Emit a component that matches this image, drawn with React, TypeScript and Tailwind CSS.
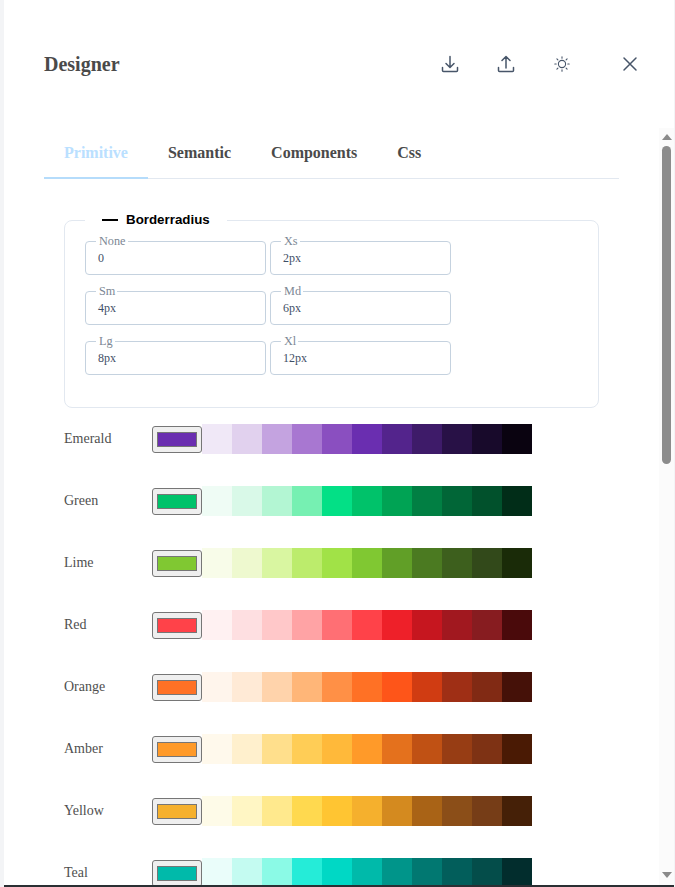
import React from "react";

const radii = [
  { label: "None", value: "0" },
  { label: "Xs", value: "2px" },
  { label: "Sm", value: "4px" },
  { label: "Md", value: "6px" },
  { label: "Lg", value: "8px" },
  { label: "Xl", value: "12px" },
];

const palettes: { name: string; base: string; shades: string[] }[] = [
  { name: "Emerald", base: "#6a2eb0", shades: ["#f0e8f7", "#e1d1ee", "#c4a3e0", "#a877d1", "#8a4fc0", "#6a2eb0", "#53248c", "#3e1b69", "#281146", "#180a2b", "#0a0310"] },
  { name: "Green", base: "#00c26a", shades: ["#effcf5", "#d9f9e8", "#b3f6d3", "#76f0b2", "#03e086", "#00c26a", "#00a354", "#017f43", "#016637", "#01512c", "#012d18"] },
  { name: "Lime", base: "#80c832", shades: ["#f8fce9", "#eef9cf", "#d9f6a1", "#bcec6c", "#a1e247", "#80c832", "#619f27", "#4b7a21", "#3d5f1d", "#32491a", "#1a2b08"] },
  { name: "Red", base: "#ff4249", shades: ["#fff1f2", "#fedfe1", "#ffc8c9", "#ffa3a5", "#ff6f74", "#ff4249", "#ee2029", "#c6161f", "#a1181f", "#871c20", "#4a0a0b"] },
  { name: "Orange", base: "#ff7125", shades: ["#fff5ec", "#ffead6", "#ffd3ab", "#ffb678", "#ff9046", "#ff7125", "#fe5519", "#d03c12", "#9f2f15", "#812a14", "#451108"] },
  { name: "Amber", base: "#ff9a29", shades: ["#fff9ec", "#fff0cd", "#ffdf8c", "#ffcd56", "#ffb93a", "#ff9a29", "#e4711d", "#c05114", "#973d14", "#7e3214", "#4a1a04"] },
  { name: "Yellow", base: "#f5b02d", shades: ["#fefbe8", "#fff6c4", "#ffe98d", "#ffd94f", "#ffc532", "#f5b02d", "#d48a1f", "#a96316", "#8b4e18", "#763d17", "#452007"] },
  { name: "Teal", base: "#00baaa", shades: ["#eafdfa", "#c4fbf1", "#8bfae6", "#25ecd8", "#00d8c5", "#00baaa", "#00958a", "#017871", "#025e5b", "#044d4a", "#022d2d"] },
];

function Icon({ children }: { children: React.ReactNode }) {
  return (
    <svg width="20" height="20" viewBox="0 0 20 20" fill="none" stroke="#475569" strokeWidth="1.5" strokeLinecap="round" strokeLinejoin="round">
      {children}
    </svg>
  );
}

export default function App() {
  return (
    <div className="h-[887px] w-[675px] overflow-hidden bg-[#f3f4f6] pl-[4px] pr-[1px] [font-family:'Liberation_Serif',serif]">
      <div className="flex h-[885px] w-[670px] flex-col bg-white">
        <header className="flex h-[128px] shrink-0 items-start justify-between pt-[52px] pl-[40px] pr-[32px]">
          <h1 className="text-[20px] leading-[24px] font-bold text-[#4a4a4a]">Designer</h1>
          <div className="flex items-center">
            <button className="flex h-[24px] w-[24px] items-center justify-center">
              <Icon>
                <path d="M10 2.5v10.5M6 9.5l4 4 4-4M2.5 13.5v3a1 1 0 0 0 1 1h13a1 1 0 0 0 1-1v-3" />
              </Icon>
            </button>
            <button className="ml-[32px] flex h-[24px] w-[24px] items-center justify-center">
              <Icon>
                <path d="M10 14V2.5M6 6.5l4-4 4 4M2.5 13.5v3a1 1 0 0 0 1 1h13a1 1 0 0 0 1-1v-3" />
              </Icon>
            </button>
            <button className="ml-[32px] flex h-[24px] w-[24px] items-center justify-center">
              <svg width="16" height="16" viewBox="0 0 16 16" fill="none" stroke="#475569" strokeWidth="1.1" strokeLinecap="round">
                <circle cx="8" cy="8" r="3.6" />
                <path d="M8 .8v1.4M8 13.8v1.4M.8 8h1.4M13.8 8h1.4M2.9 2.9l1 1M12.1 12.1l1 1M2.9 13.1l1-1M12.1 3.9l1-1" />
              </svg>
            </button>
            <button className="ml-[44px] flex h-[24px] w-[24px] items-center justify-center">
              <Icon>
                <path d="M4 4l12 12M16 4L4 16" />
              </Icon>
            </button>
          </div>
        </header>

        <div className="flex min-h-0 flex-1">
          <div className="min-w-0 flex-1 overflow-hidden px-[40px] pt-[2px]">
            <nav className="flex h-[49px] border-b border-[#e2e8f0]">
              <div className="relative flex h-[48px] items-center px-[20px] pb-[2px] text-[16px] font-bold text-[#bae0ff]">
                Primitive
                <span className="absolute right-0 -bottom-px left-0 h-[2px] bg-[#b5dcfb]" />
              </div>
              <div className="flex h-[48px] items-center px-[20px] pb-[2px] text-[16px] font-bold text-[#4a4a4a]">Semantic</div>
              <div className="flex h-[48px] items-center px-[20px] pb-[2px] text-[16px] font-bold text-[#4a4a4a]">Components</div>
              <div className="flex h-[48px] items-center px-[20px] pb-[2px] text-[16px] font-bold text-[#4a4a4a]">Css</div>
            </nav>

            <div className="px-[20px] pt-[34px]">
              <fieldset className="h-[195px] rounded-[8px] border border-[#e2e8f0] px-[20px]">
                <legend className="flex h-[14px] items-center gap-[8px] px-[17px] text-[13.33px] font-bold text-black [font-family:'Liberation_Sans',sans-serif]">
                  <span className="h-[2px] w-[16px] bg-black" />
                  Borderradius
                </legend>
                <div className="mt-[14px] grid w-[366px] grid-cols-2 gap-x-[4px] gap-y-[16px]">
                  {radii.map((r) => (
                    <div key={r.label} className="relative h-[34px] w-[181px] rounded-[4px] border border-[#c5d2df] pl-[12px] pt-[8px] text-[12px] leading-[16px] text-[#3f4f66]">
                      {r.value}
                      <span className="absolute -top-[7px] left-[10px] bg-white pl-[3px] pr-[2px] text-[12.25px] leading-[13px] text-[#7c8794]">{r.label}</span>
                    </div>
                  ))}
                </div>
              </fieldset>

              <div className="mt-[16px] flex flex-col gap-[32px]">
                {palettes.map((p) => (
                  <div key={p.name} className="flex h-[30px] items-center">
                    <span className="w-[88px] text-[14px] leading-[16px] text-[#4f4f4f]">{p.name}</span>
                    <input
                      type="color"
                      defaultValue={p.base}
                      className="mt-[1px] h-[27px] w-[50px] rounded-[3px] border border-[#767676] bg-[#efefef] px-[4px] py-[5px] [&::-webkit-color-swatch-wrapper]:p-0 [&::-webkit-color-swatch]:border [&::-webkit-color-swatch]:border-[#767676]"
                    />
                    <div className="flex">
                      {p.shades.map((c) => (
                        <span key={c} className="h-[30px] w-[30px]" style={{ backgroundColor: c }} />
                      ))}
                    </div>
                  </div>
                ))}
              </div>
            </div>
          </div>

          <div className="flex w-[15px] shrink-0 flex-col items-center bg-[#fbfbfb]">
            <svg width="10" height="6" viewBox="0 0 10 6" className="mt-[6px] shrink-0" fill="#8a8a8a"><path d="M5 0l5 6H0z" /></svg>
            <div className="mt-[6px] h-[318px] w-[9px] shrink-0 rounded-[5px] bg-[#8c8c8c]" />
            <div className="flex-1" />
            <svg width="10" height="6" viewBox="0 0 10 6" className="mb-[7px] shrink-0" fill="#8a8a8a"><path d="M0 0h10L5 6z" /></svg>
          </div>
        </div>
      </div>
      <div className="h-[2px] w-full bg-[#2a2f33]" />
    </div>
  );
}
